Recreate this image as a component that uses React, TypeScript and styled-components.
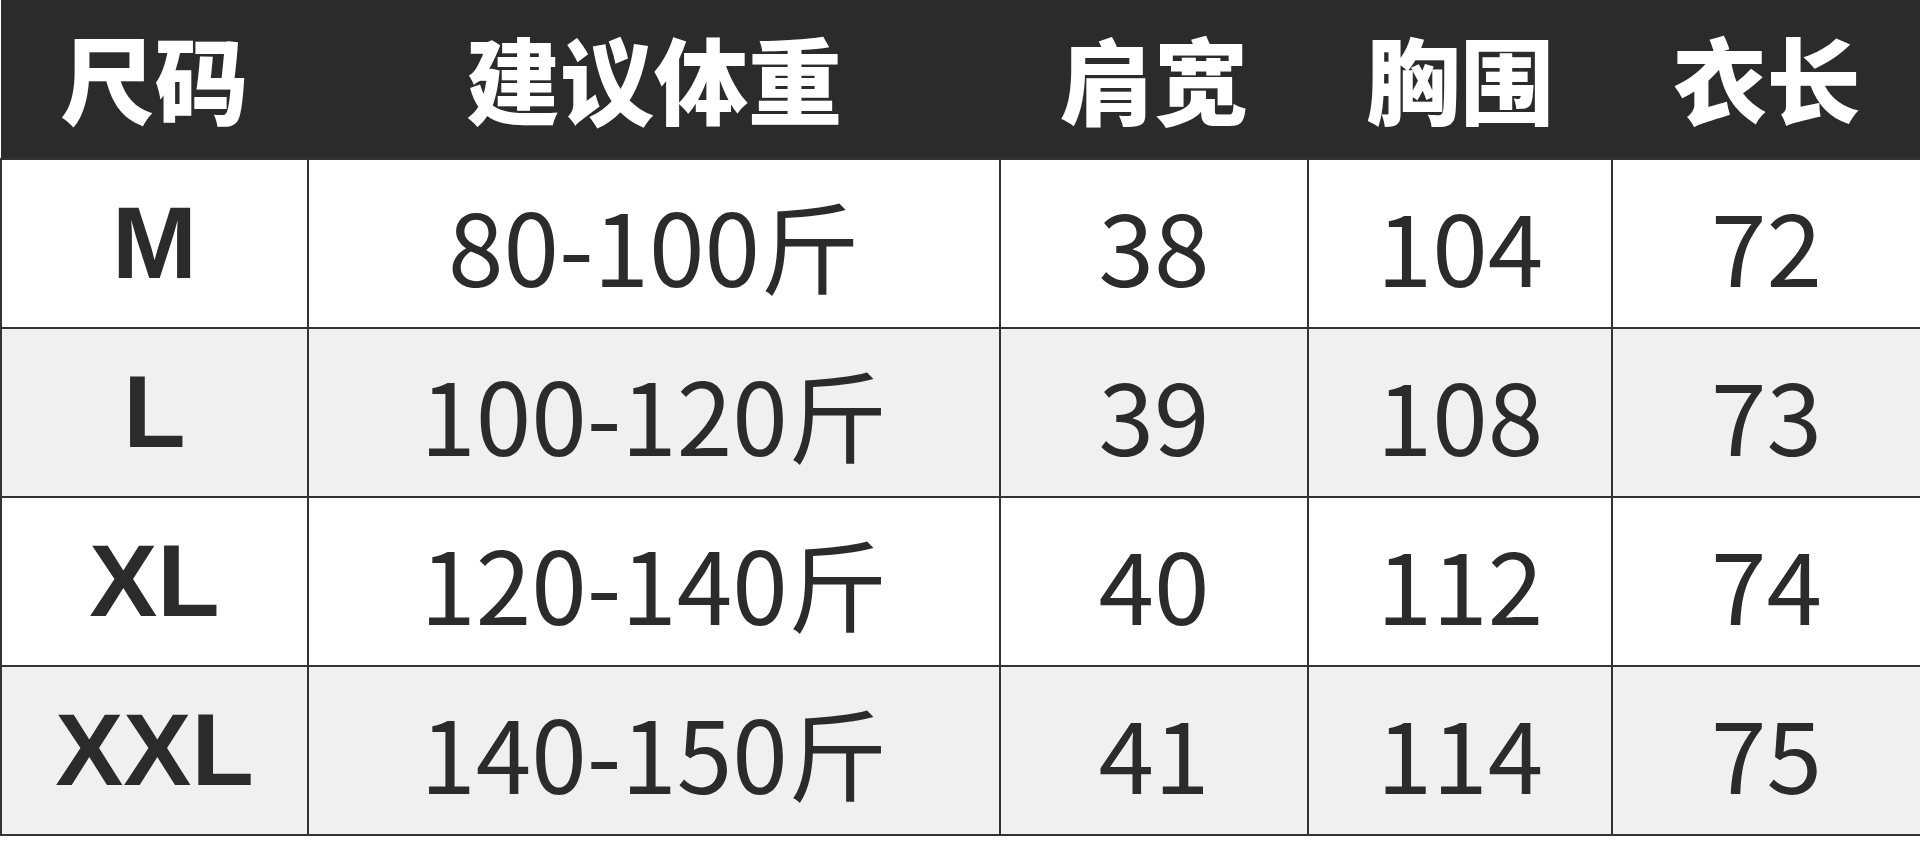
import styled, { createGlobalStyle } from 'styled-components';

const GlobalStyle = createGlobalStyle`
  html, body {
    margin: 0;
    padding: 0;
    background: #ffffff;
  }
`;

const columns = ['尺码', '建议体重', '肩宽', '胸围', '衣长'];
const widths = [307, 692, 308, 304, 309];

const rows = [
  { size: 'M', weight: '80-100斤', shoulder: '38', chest: '104', length: '72' },
  { size: 'L', weight: '100-120斤', shoulder: '39', chest: '108', length: '73' },
  { size: 'XL', weight: '120-140斤', shoulder: '40', chest: '112', length: '74' },
  { size: 'XXL', weight: '140-150斤', shoulder: '41', chest: '114', length: '75' },
];

const App = () => {
  return (
    <>
      <GlobalStyle />
      <Table>
        <colgroup>
          {widths.map((w, i) => (
            <col key={i} style={{ width: w }} />
          ))}
        </colgroup>
        <thead>
          <tr>
            {columns.map((c) => (
              <HeadCell key={c}>{c}</HeadCell>
            ))}
          </tr>
        </thead>
        <tbody>
          {rows.map((r, i) => (
            <Row key={r.size} $shaded={i % 2 === 1}>
              <SizeCell>{r.size}</SizeCell>
              <Cell>{r.weight}</Cell>
              <Cell>{r.shoulder}</Cell>
              <Cell>{r.chest}</Cell>
              <Cell>{r.length}</Cell>
            </Row>
          ))}
        </tbody>
      </Table>
    </>
  );
};

export default App;

const Table = styled.table`
  width: 1920px;
  table-layout: fixed;
  border-collapse: collapse;
  color: #2b2b2b;
`;

const HeadCell = styled.th`
  height: 154px;
  padding: 0 0 4px;
  background: #2b2b2b;
  color: #ffffff;
  font: 900 94px 'Noto Sans CJK SC', sans-serif;
  line-height: 1;
  text-align: center;
  vertical-align: middle;
`;

const Row = styled.tr<{ $shaded: boolean }>`
  background: ${(p) => (p.$shaded ? '#f0f0f0' : '#ffffff')};
`;

const Cell = styled.td`
  height: 167px;
  padding: 0;
  border: 2px solid #333333;
  font: 400 100px 'Noto Sans CJK SC', sans-serif;
  line-height: 1;
  text-align: center;
  vertical-align: middle;
`;

const SizeCell = styled(Cell)`
  font: 700 102px 'Liberation Sans', Arial, sans-serif;
`;
